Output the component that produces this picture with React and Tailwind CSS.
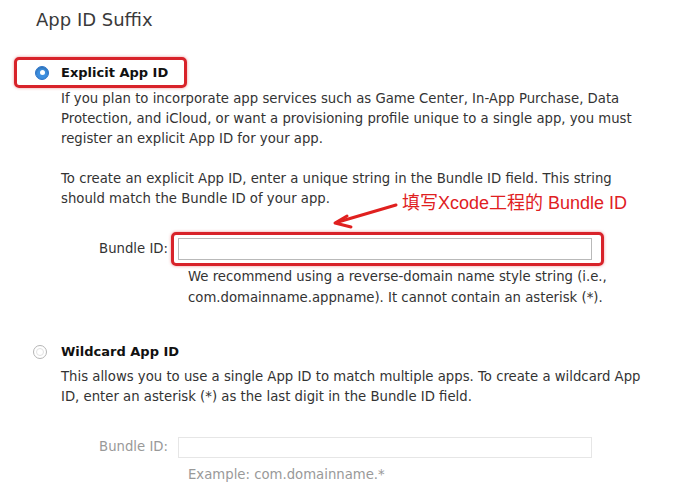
import React from "react"

const font = { fontFamily: '"DejaVu Sans", "Noto Sans CJK SC", sans-serif' }

const Radio = ({ checked }) =>
  checked ? (
    <span className="w-[14px] h-[14px] rounded-full bg-[#3d8fe0] border border-[#2f74c8] flex items-center justify-center shadow-[inset_0_1px_2px_rgba(0,0,0,0.25)]">
      <span className="w-[5px] h-[5px] rounded-full bg-white" />
    </span>
  ) : (
    <span className="w-[14px] h-[14px] rounded-full bg-white border border-[#b5b5b5] flex items-center justify-center">
      <span className="w-[8px] h-[8px] rounded-full border border-[#e2e2e2]" />
    </span>
  )

export default function App() {
  return (
    <div className="w-[694px] h-[495px] bg-white text-[#333] overflow-hidden relative" style={font}>
      <h1 className="pl-[36px] pt-[7px] text-[18px] leading-[26px] text-[#3a3a3a]">App ID Suffix</h1>

      {/* explicit */}
      <div className="mt-[24px] pl-[14px]">
        <div className="inline-flex items-center h-[31px] pl-[18px] pr-[16px] border-[3px] border-[#d8232a] rounded-[5px] shadow-[0_0_3px_rgba(216,35,42,0.5)]">
          <Radio checked />
          <span className="ml-[12px] text-[13px] font-bold text-[#111]">Explicit App ID</span>
        </div>
      </div>
      <div className="pl-[61px] text-[13.25px] leading-[20px] mt-[1px]">
        <p>
          If you plan to incorporate app services such as Game Center, In-App Purchase, Data<br />
          Protection, and iCloud, or want a provisioning profile unique to a single app, you must<br />
          register an explicit App ID for your app.
        </p>
        <p className="mt-[20px]">
          To create an explicit App ID, enter a unique string in the Bundle ID field. This string<br />
          should match the Bundle ID of your app.
        </p>
      </div>

      <div className="relative">
        <svg className="absolute left-[330px] -top-[10px]" width="72" height="32" viewBox="0 0 72 32">
          <path d="M66 6 L8 23" stroke="#e0201f" strokeWidth="3" strokeLinecap="round" fill="none" />
          <path d="M17 17 L5 24 L21 28" stroke="#e0201f" strokeWidth="3" strokeLinecap="round" strokeLinejoin="round" fill="none" />
        </svg>
        <span className="absolute left-[402px] -top-[18px] text-[18px] leading-[24px] text-[#e0201f] whitespace-nowrap" style={{ fontFamily: '"Liberation Sans", "Noto Sans CJK SC", sans-serif' }}>
          填写Xcode工程的 Bundle ID
        </span>
      </div>

      <div className="flex items-center mt-[23px]">
        <span className="w-[168px] text-right text-[13.25px]">Bundle ID:</span>
        <div className="ml-[3px] pl-[4px] pr-[9px] py-[3px] border-[3px] border-[#d8232a] rounded-[5px] shadow-[0_0_3px_rgba(216,35,42,0.5)]">
          <div className="w-[414px] h-[22px] border border-[#b9b9b9] bg-white" />
        </div>
      </div>
      <p className="pl-[188px] text-[13.25px] leading-[21px] mt-[0px]">
        We recommend using a reverse-domain name style string (i.e.,<br />
        com.domainname.appname). It cannot contain an asterisk (*).
      </p>

      {/* wildcard */}
      <div className="flex items-center pl-[33px] mt-[34px]">
        <Radio />
        <span className="ml-[14px] text-[13px] font-bold text-[#111]">Wildcard App ID</span>
      </div>
      <p className="pl-[61px] text-[13.25px] leading-[20px] mt-[5px]">
        This allows you to use a single App ID to match multiple apps. To create a wildcard App<br />
        ID, enter an asterisk (*) as the last digit in the Bundle ID field.
      </p>
      <div className="flex items-center mt-[30px]">
        <span className="w-[168px] text-right text-[13.25px] text-[#999]">Bundle ID:</span>
        <div className="ml-[10px] w-[414px] h-[21px] border border-[#e6e6e6] bg-white" />
      </div>
      <p className="pl-[188px] text-[13.25px] leading-[20px] mt-[7px] text-[#999]">Example: com.domainname.*</p>
    </div>
  )
}
